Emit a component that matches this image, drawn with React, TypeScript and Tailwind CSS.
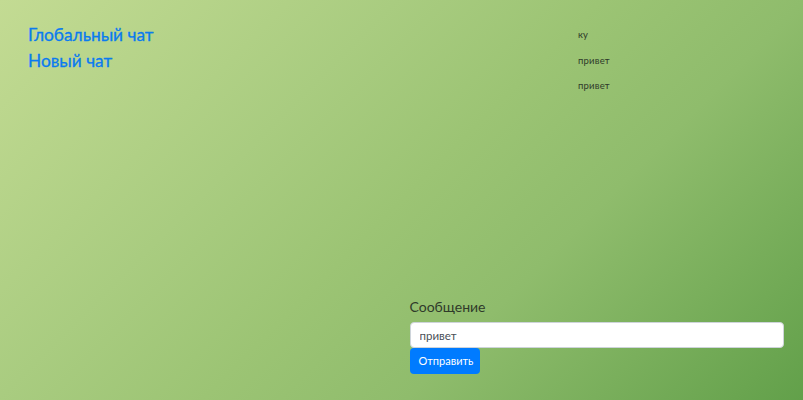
import React from 'react';

const messages = ['ку', 'привет', 'привет'];

const App: React.FC = () => {
  return (
    <div
      className="w-[803px] h-[400px] flex flex-col font-['Lato',sans-serif] bg-[linear-gradient(135deg,#c3db93_0%,#a9cc80_33%,#9cc474_50%,#8fbc6c_67%,#62a04a_100%)]"
    >
      {/* Верх: ссылки и сообщения */}
      <div className="flex flex-1">
        <div className="w-[578px] pl-[28px] pt-[22px] flex flex-col">
          <a className="text-[17.3px] leading-[26px] text-[#0a7bf0] [-webkit-text-stroke:0.3px_#0a7bf0]">Глобальный чат</a>
          <a className="text-[17.3px] leading-[26px] text-[#0a7bf0] [-webkit-text-stroke:0.3px_#0a7bf0]">Новый чат</a>
        </div>
        <div className="pt-[27px] flex flex-col gap-[10.5px] text-[9.5px] leading-[15px] text-[#2f3a2a] tracking-[0.2px]">
          {messages.map((m, i) => (
            <div key={i}>{m}</div>
          ))}
        </div>
      </div>

      {/* Форма отправки */}
      <div className="grid grid-cols-2 pb-[26px]">
        <div />
        <div className="pl-[8px] pr-[19px] flex flex-col items-start">
          <label className="text-[14px] leading-[20px] text-[#2f3a2a] mb-[5px]">Сообщение</label>
          <input
            className="w-full h-[26px] bg-white border border-[#ced4da] rounded-[4px] px-[9px] text-[11.5px] text-[#495057]"
            defaultValue="привет"
          />
          <button className="h-[26px] w-[70px] px-[9px] rounded-[4px] bg-[#007bff] text-white text-[11px] leading-[26px] text-left">
            Отправить
          </button>
        </div>
      </div>
    </div>
  );
};

export default App;
